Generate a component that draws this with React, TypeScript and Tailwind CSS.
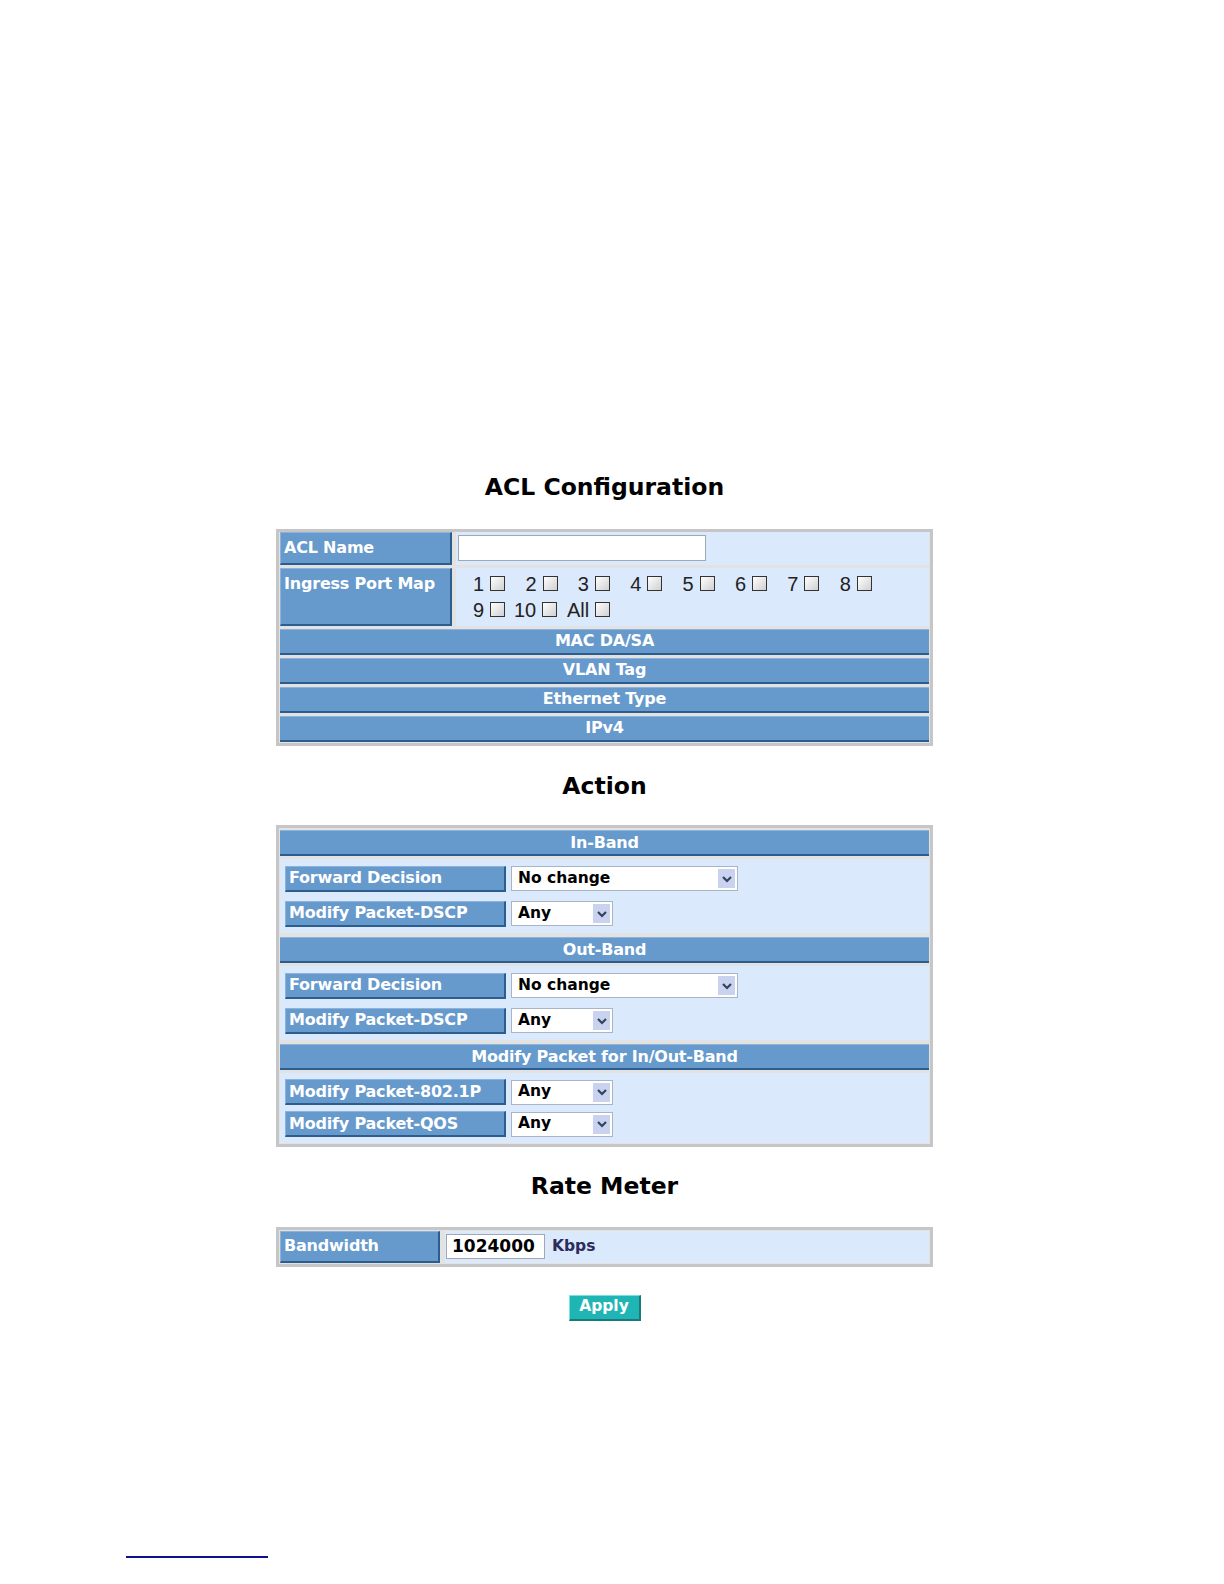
import React from 'react';

const font = "font-['Liberation_Sans',Arial,sans-serif]";
const bold = "font-['DejaVu_Sans',Verdana,sans-serif] font-bold";

function Title({ children }: { children: React.ReactNode }) {
  return (
    <h2 className={`${bold} text-center text-[23.5px] leading-none text-black`}>{children}</h2>
  );
}

function Bar({ children }: { children: React.ReactNode }) {
  return (
    <div className={`${bold} flex h-[26px] items-center justify-center border-t border-t-[#8db3dd] border-b-2 border-b-[#2d5c8f] bg-[#6699cc] text-[16px] tracking-[-0.2px] text-white`}>
      {children}
    </div>
  );
}

function Label({ children, className }: { children: React.ReactNode; className: string }) {
  return (
    <div
      className={`${bold} flex shrink-0 border-t border-l border-t-[#8db3dd] border-l-[#8db3dd] border-b-2 border-r-2 border-b-[#2d5c8f] border-r-[#2d5c8f] bg-[#6699cc] pl-[3px] text-[16px] tracking-[-0.2px] text-white ${className}`}
    >
      {children}
    </div>
  );
}

function Box() {
  return (
    <span className="inline-block h-[15px] w-[15px] border border-[#333] bg-gradient-to-br from-white to-[#d0d0d0]" />
  );
}

function Port({ n, w }: { n: string; w: string }) {
  return (
    <span className={`flex items-center gap-[6px] ${w}`}>
      <span>{n}</span>
      <Box />
    </span>
  );
}

function Select({ value, w }: { value: string; w: string }) {
  return (
    <div className={`flex h-[25px] items-center justify-between border border-[#a9b4c4] bg-white pl-[6px] pr-[2px] ${w}`}>
      <span className={`${bold} text-[15.5px] text-black`}>{value}</span>
      <span className="flex h-[19px] w-[17px] items-center justify-center bg-[#c9d3f0]">
        <svg width="10" height="8" viewBox="0 0 10 8">
          <path d="M1 2 L5 6 L9 2" fill="none" stroke="#34425f" strokeWidth="2.2" />
        </svg>
      </span>
    </div>
  );
}

function Field({ label, value, w }: { label: string; value: string; w: string }) {
  return (
    <div className="flex items-center gap-[5px]">
      <Label className="h-[26px] w-[221px] items-center">{label}</Label>
      <Select value={value} w={w} />
    </div>
  );
}

export default function App() {
  return (
    <div className={`${font} bg-white`}>
      <div className="ml-[276px] w-[657px] pt-[476px]">
        <Title>ACL Configuration</Title>

        <div className="mt-[29px] flex flex-col gap-[3px] border-[3px] border-[#c6c6c6] bg-[#e2e2e2] px-px pb-px">
          <div className="flex h-[33px] gap-[4px]">
            <Label className="w-[172px] items-center">ACL Name</Label>
            <div className="flex flex-1 items-center bg-[#dbe9fc] pl-[2px]">
              <div className="h-[26px] w-[248px] border border-[#a0a8b4] bg-white" />
            </div>
          </div>
          <div className="flex h-[58px] gap-[4px]">
            <Label className="w-[172px] items-start pt-[3px]">Ingress Port Map</Label>
            <div className="flex flex-1 flex-col justify-center bg-[#dbe9fc] pl-[17px] text-[20px] leading-[26px] text-[#222]">
              <div className="flex">
                <Port n="1" w="w-[52.4px]" />
                <Port n="2" w="w-[52.4px]" />
                <Port n="3" w="w-[52.4px]" />
                <Port n="4" w="w-[52.4px]" />
                <Port n="5" w="w-[52.4px]" />
                <Port n="6" w="w-[52.4px]" />
                <Port n="7" w="w-[52.4px]" />
                <Port n="8" w="w-[52.4px]" />
              </div>
              <div className="flex">
                <Port n="9" w="w-[41px]" />
                <Port n="10" w="w-[53px]" />
                <Port n="All" w="w-[60px]" />
              </div>
            </div>
          </div>
          <Bar>MAC DA/SA</Bar>
          <Bar>VLAN Tag</Bar>
          <Bar>Ethernet Type</Bar>
          <Bar>IPv4</Bar>
        </div>

        <div className="mt-[29px]">
          <Title>Action</Title>
        </div>

        <div className="mt-[27px] flex flex-col border-[3px] border-[#c6c6c6] bg-[#e2e2e2] px-px pt-[2px] pb-px">
          <Bar>In-Band</Bar>
          <div className="mt-[3px] flex h-[74px] flex-col justify-center gap-[9px] bg-[#dbe9fc] pl-[5px]">
            <Field label="Forward Decision" value="No change" w="w-[227px]" />
            <Field label="Modify Packet-DSCP" value="Any" w="w-[102px]" />
          </div>
          <div className="mt-[4px]">
            <Bar>Out-Band</Bar>
          </div>
          <div className="mt-[3px] flex h-[74px] flex-col justify-center gap-[9px] bg-[#dbe9fc] pl-[5px]">
            <Field label="Forward Decision" value="No change" w="w-[227px]" />
            <Field label="Modify Packet-DSCP" value="Any" w="w-[102px]" />
          </div>
          <div className="mt-[4px]">
            <Bar>Modify Packet for In/Out-Band</Bar>
          </div>
          <div className="mt-[3px] flex h-[70px] flex-col justify-center gap-[6px] bg-[#dbe9fc] pl-[5px]">
            <Field label="Modify Packet-802.1P" value="Any" w="w-[102px]" />
            <Field label="Modify Packet-QOS" value="Any" w="w-[102px]" />
          </div>
        </div>

        <div className="mt-[28px]">
          <Title>Rate Meter</Title>
        </div>

        <div className="mt-[28px] flex h-[40px] gap-[5px] border-[3px] border-[#c6c6c6] bg-[#e2e2e2] px-px py-px">
          <Label className="w-[160px] items-center">Bandwidth</Label>
          <div className="flex flex-1 items-center gap-[7px] bg-[#dbe9fc] pl-px">
            <div className={`${bold} flex h-[25px] w-[99px] items-center border border-[#a0a8b4] bg-white pl-[5px] text-[17px] text-black`}>
              1024000
            </div>
            <span className={`${bold} text-[15.5px] text-[#2c2c5c]`}>Kbps</span>
          </div>
        </div>

        <div className="mt-[28px] flex justify-center">
          <button className={`${bold} flex h-[26px] w-[72px] items-center justify-center border-t border-l border-t-[#7fe0e0] border-l-[#7fe0e0] border-b-2 border-r-2 border-b-[#1a7a7a] border-r-[#1a7a7a] bg-[#1fb5b5] text-[15.5px] text-white`}>
            Apply
          </button>
        </div>
      </div>

      <div className="ml-[126px] mt-[235px] h-[2px] w-[142px] bg-[#10108a]" />
    </div>
  );
}
